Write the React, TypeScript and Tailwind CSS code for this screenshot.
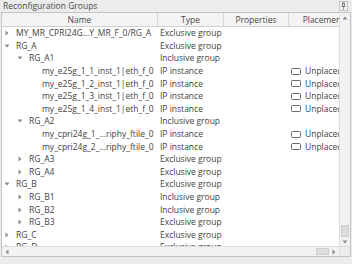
import React from "react";

type Row = {
  level: number;
  name: string;
  arrow: "right" | "down" | null;
  type: string;
  placed?: boolean;
};

const rows: Row[] = [
  { level: 0, name: "MY_MR_CPRI24G…Y_MR_F_0/RG_A", arrow: "right", type: "Exclusive group" },
  { level: 0, name: "RG_A", arrow: "down", type: "Exclusive group" },
  { level: 1, name: "RG_A1", arrow: "down", type: "Inclusive group" },
  { level: 2, name: "my_e25g_1_1_inst_1|eth_f_0", arrow: null, type: "IP instance", placed: true },
  { level: 2, name: "my_e25g_1_2_inst_1|eth_f_0", arrow: null, type: "IP instance", placed: true },
  { level: 2, name: "my_e25g_1_3_inst_1|eth_f_0", arrow: null, type: "IP instance", placed: true },
  { level: 2, name: "my_e25g_1_4_inst_1|eth_f_0", arrow: null, type: "IP instance", placed: true },
  { level: 1, name: "RG_A2", arrow: "down", type: "Inclusive group" },
  { level: 2, name: "my_cpri24g_1_…riphy_ftile_0", arrow: null, type: "IP instance", placed: true },
  { level: 2, name: "my_cpri24g_2_…riphy_ftile_0", arrow: null, type: "IP instance", placed: true },
  { level: 1, name: "RG_A3", arrow: "right", type: "Exclusive group" },
  { level: 1, name: "RG_A4", arrow: "right", type: "Exclusive group" },
  { level: 0, name: "RG_B", arrow: "down", type: "Exclusive group" },
  { level: 1, name: "RG_B1", arrow: "right", type: "Inclusive group" },
  { level: 1, name: "RG_B2", arrow: "right", type: "Inclusive group" },
  { level: 1, name: "RG_B3", arrow: "right", type: "Exclusive group" },
  { level: 0, name: "RG_C", arrow: "right", type: "Exclusive group" },
  { level: 0, name: "RG_D", arrow: "right", type: "Exclusive group" },
];

function Arrow({ dir }: { dir: "right" | "down" | "up" | "left" }) {
  const pts =
    dir === "right"
      ? "1.5,0.5 4.5,3 1.5,5.5"
      : dir === "left"
      ? "4.5,0.5 1.5,3 4.5,5.5"
      : dir === "down"
      ? "0.5,1.5 5.5,1.5 3,4.5"
      : "0.5,4.5 5.5,4.5 3,1.5";
  return (
    <svg width="6" height="6" viewBox="0 0 6 6">
      <polygon points={pts} fill="#8a8a8a" />
    </svg>
  );
}

export default function App() {
  return (
    <div className="w-[352px] h-[264px] bg-[#ececec] flex flex-col font-['Open_Sans',sans-serif] text-[8.5px] text-[#424242] leading-[12px] overflow-hidden">
      <div className="h-[12px] flex items-center pl-[3px] pr-[4px]">
        <span className="text-[#4a4a4a]">Reconfiguration Groups</span>
        <div className="ml-auto w-[9px] h-[10px] border border-[#c4c4c4] bg-[#f3f3f3] flex items-center justify-center">
          <svg width="5" height="8" viewBox="0 0 5 8">
            <rect x="1" y="0.5" width="3" height="1" fill="#777" />
            <rect x="1.5" y="1.5" width="2" height="2.5" fill="none" stroke="#777" strokeWidth="0.8" />
            <rect x="0.5" y="4" width="4" height="0.9" fill="#777" />
            <rect x="2.2" y="4.8" width="0.7" height="3" fill="#777" />
          </svg>
        </div>
      </div>
      <div className="ml-[1px] w-[350px] h-[245px] border border-[#c4c4c4] bg-white flex flex-col">
        <div className="flex h-[233px]">
          <div className="w-[337px] overflow-hidden flex flex-col">
            <div className="h-[14px] flex shrink-0 bg-[#f4f4f4] border-b border-[#cfcfcf] text-[#4a4a4a]">
              <div className="w-[156px] shrink-0 flex items-center justify-center border-r border-[#d6d6d6]">Name</div>
              <div className="w-[66px] shrink-0 flex items-center justify-center border-r border-[#d6d6d6]">Type</div>
              <div className="w-[65px] shrink-0 flex items-center justify-center border-r border-[#d6d6d6]">Properties</div>
              <div className="w-[69px] shrink-0 flex items-center justify-center whitespace-nowrap">Placement</div>
            </div>
            <div className="flex flex-col">
              {rows.map((r, i) => (
                <div key={i} className="h-[12.6px] flex items-center shrink-0 whitespace-nowrap">
                  <div className="w-[156px] shrink-0 flex items-center">
                    <div style={{ width: r.level * 13 }} className="shrink-0" />
                    <div className="w-[10px] shrink-0 flex items-center justify-center">
                      {r.arrow && <Arrow dir={r.arrow} />}
                    </div>
                    <span className="ml-[4px]">{r.name}</span>
                  </div>
                  <div className="w-[66px] shrink-0 pl-[2px]">{r.type}</div>
                  <div className="w-[65px] shrink-0" />
                  <div className="w-[69px] shrink-0 pl-[2px] flex items-center">
                    {r.placed && (
                      <>
                        <div className="w-[10px] h-[7px] rounded-[1.5px] border border-[#6a6a6a] shrink-0" />
                        <span className="ml-[4px]">Unplaced</span>
                      </>
                    )}
                  </div>
                </div>
              ))}
            </div>
          </div>
          <div className="w-[11px] shrink-0 bg-[#f2f2f2] border-l border-[#dedede] flex flex-col">
            <div className="h-[10px] flex items-center justify-center">
              <Arrow dir="up" />
            </div>
            <div className="flex-1" />
            <div className="h-[12px] mx-[1px] bg-[#dcdcdc] border border-[#cfcfcf]" />
            <div className="h-[9px] flex items-center justify-center">
              <Arrow dir="down" />
            </div>
          </div>
        </div>
        <div className="h-[10px] flex border-t border-[#dcdcdc] bg-[#f2f2f2]">
          <div className="w-[10px] flex items-center justify-center">
            <Arrow dir="left" />
          </div>
          <div className="flex-1" />
          <div className="w-[13px] my-[1px] bg-[#dcdcdc] border border-[#cfcfcf]" />
          <div className="w-[10px] flex items-center justify-center">
            <Arrow dir="right" />
          </div>
          <div className="w-[11px] bg-[#ececec] border-l border-[#dedede]" />
        </div>
      </div>
    </div>
  );
}
